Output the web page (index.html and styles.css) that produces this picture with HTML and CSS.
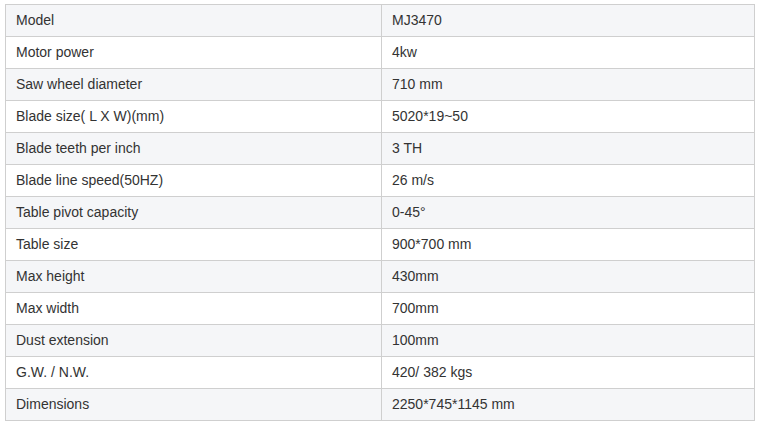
FILE: index.html
```html
<!DOCTYPE html>
<html>
<head>
<meta charset="utf-8">
<link rel="stylesheet" href="styles.css">
</head>
<body>
<div class="wrap">
<div class="spec">
<div class="row"><div class="cell">Model</div><div class="cell">MJ3470</div></div>
<div class="row"><div class="cell">Motor power</div><div class="cell">4kw</div></div>
<div class="row"><div class="cell">Saw wheel diameter</div><div class="cell">710 mm</div></div>
<div class="row"><div class="cell">Blade size( L X W)(mm)</div><div class="cell">5020*19~50</div></div>
<div class="row"><div class="cell">Blade teeth per inch</div><div class="cell">3 TH</div></div>
<div class="row"><div class="cell">Blade line speed(50HZ)</div><div class="cell">26 m/s</div></div>
<div class="row"><div class="cell">Table pivot capacity</div><div class="cell">0-45°</div></div>
<div class="row"><div class="cell">Table size</div><div class="cell">900*700 mm</div></div>
<div class="row"><div class="cell">Max height</div><div class="cell">430mm</div></div>
<div class="row"><div class="cell">Max width</div><div class="cell">700mm</div></div>
<div class="row"><div class="cell">Dust extension</div><div class="cell">100mm</div></div>
<div class="row"><div class="cell">G.W. / N.W.</div><div class="cell">420/ 382 kgs</div></div>
<div class="row"><div class="cell">Dimensions</div><div class="cell">2250*745*1145 mm</div></div>
</div>
</div>
</body>
</html>
```
FILE: styles.css
```css
html, body {
  margin: 0;
  padding: 0;
  background: #fff;
}
.wrap {
  padding: 4px 0 0 5px;
}
.spec {
  width: 750px;
  box-sizing: border-box;
  border-top: 1px solid #cfcfcf;
  border-left: 1px solid #cfcfcf;
  font-family: "Liberation Sans", Arial, sans-serif;
  font-size: 14px;
  color: #333;
}
.row {
  display: grid;
  grid-template-columns: 376px 373px;
}
.row:nth-child(odd) {
  background: #f5f6f8;
}
.cell {
  box-sizing: border-box;
  height: 32px;
  line-height: 31px;
  padding: 0 10px;
  border-right: 1px solid #cfcfcf;
  border-bottom: 1px solid #cfcfcf;
  white-space: nowrap;
}
```
